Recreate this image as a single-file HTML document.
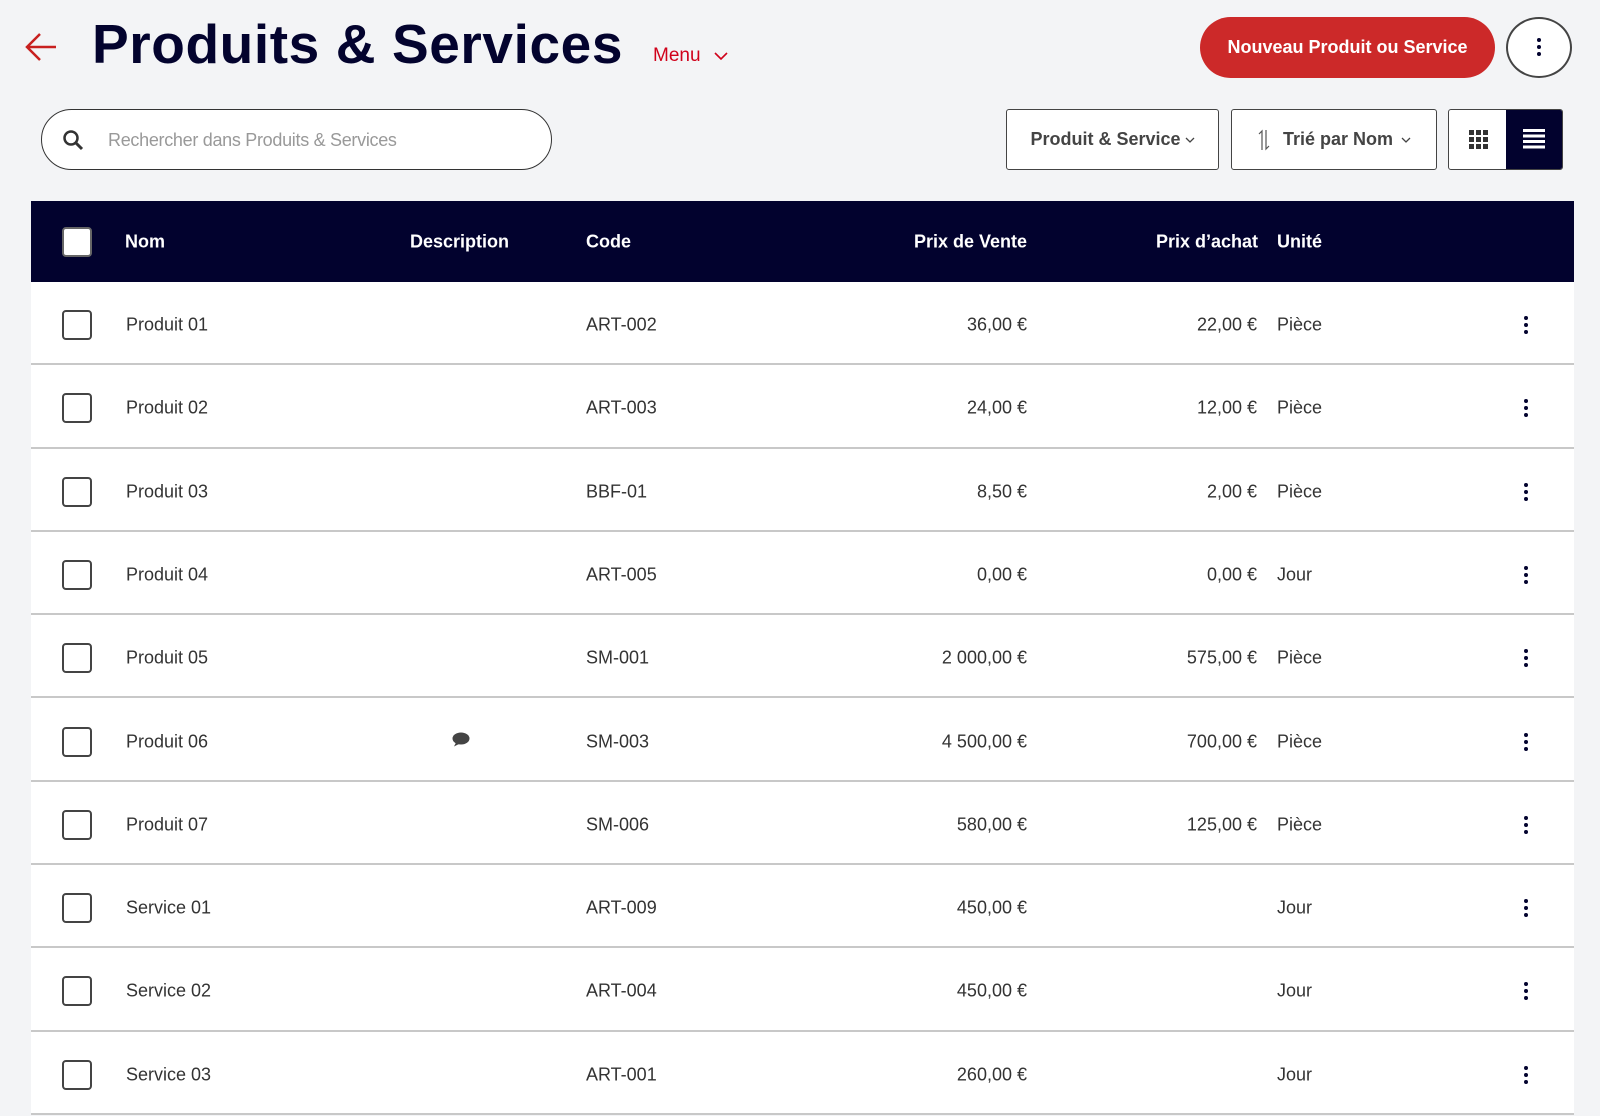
<!DOCTYPE html>
<html><head><meta charset="utf-8"><style>
*{box-sizing:border-box;margin:0;padding:0}
body{width:1600px;height:1116px;background:#f3f4f6;font-family:"Liberation Sans",sans-serif;position:relative;overflow:hidden;color:#333}
.abs{position:absolute}
.title{left:92px;top:12px;font-size:55px;font-weight:bold;color:#03032e;letter-spacing:0.6px;white-space:nowrap}
.menu{left:653px;top:45px;color:#d0021b;font-size:19px}
.red{left:1200px;top:17px;width:295px;height:61px;border-radius:31px;background:#cc2929;color:#fff;font-weight:bold;font-size:18px;display:flex;align-items:center;justify-content:center}
.circ{left:1506px;top:17px;width:66px;height:61px;border-radius:50%;border:2px solid #444;background:#fff}
.search{left:41px;top:109px;width:511px;height:61px;border:1.5px solid #333;border-radius:31px;background:#fff}
.search span{position:absolute;left:66px;top:20px;color:#999;font-size:18px;letter-spacing:-0.3px}
.btn{top:109px;height:61px;border:1.5px solid #444;border-radius:3px;background:#fff;display:flex;align-items:center;justify-content:center;font-size:18px;color:#444;font-weight:bold}
.table{left:31px;top:201px;width:1543px;height:913px;background:#fff}
.head{position:absolute;left:0;top:0;width:100%;height:81px;background:#02022e;color:#fff;font-weight:bold;font-size:18px}
.head div,.row div{position:absolute;top:50%;transform:translateY(-50%);white-space:nowrap}
.row div{top:53%}
.row{position:absolute;left:0;width:100%;height:83.3px;border-bottom:2px solid #c8c8c8;font-size:18px;color:#333}
.cb{width:30px;height:30px;border:2px solid #444;border-radius:4px;left:31px}
.r{text-align:right}
.keb{left:1493px;width:4px}
.keb i{display:block;width:4px;height:4px;border-radius:50%;background:#02022e;margin:3px 0}
</style></head><body>
<svg class="abs" style="left:24px;top:32px" width="34" height="30" viewBox="0 0 34 30"><path d="M32 15H3M16 2L3 15l13 13" fill="none" stroke="#c8201f" stroke-width="2.5"/></svg>
<div class="abs title">Produits &amp; Services</div>
<div class="abs menu">Menu <svg width="14" height="10" viewBox="0 0 14 10" style="margin-left:8px"><path d="M1 2l6 6 6-6" fill="none" stroke="#d0021b" stroke-width="1.6"/></svg></div>
<div class="abs red">Nouveau Produit ou Service</div>
<div class="abs circ"><div class="abs keb" style="left:29px;top:16px"><i></i><i></i><i></i></div></div>
<div class="abs search"><svg class="abs" style="left:20px;top:19px" width="22" height="22" viewBox="0 0 22 22"><circle cx="9" cy="9" r="6.5" fill="none" stroke="#333" stroke-width="2.5"/><path d="M14 14l6 6" stroke="#333" stroke-width="3"/></svg><span>Rechercher dans Produits &amp; Services</span></div>
<div class="abs btn" style="left:1006px;width:213px">Produit &amp; Service <svg width="10" height="8" viewBox="0 0 10 8" style="margin-left:4px"><path d="M1 2l4 4 4-4" fill="none" stroke="#444" stroke-width="1.3"/></svg></div>
<div class="abs btn" style="left:1231px;width:206px"><svg width="14" height="24" viewBox="0 0 14 24" style="margin-right:12px"><path d="M5 22V3L2 6M9 2v19l3-3" fill="none" stroke="#555" stroke-width="1.2"/></svg>Trié par Nom <svg width="10" height="8" viewBox="0 0 10 8" style="margin-left:8px"><path d="M1 2l4 4 4-4" fill="none" stroke="#444" stroke-width="1.3"/></svg></div>
<div class="abs btn" style="left:1448px;width:115px;justify-content:flex-start;overflow:hidden">
<svg style="margin-left:20px" width="20" height="20" viewBox="0 0 20 20" fill="#333"><rect x="0" y="0" width="5" height="5"/><rect x="7" y="0" width="5" height="5"/><rect x="14" y="0" width="5" height="5"/><rect x="0" y="7" width="5" height="5"/><rect x="7" y="7" width="5" height="5"/><rect x="14" y="7" width="5" height="5"/><rect x="0" y="14" width="5" height="5"/><rect x="7" y="14" width="5" height="5"/><rect x="14" y="14" width="5" height="5"/></svg>
<div class="abs" style="left:57px;top:-2px;width:60px;height:62px;background:#02022e"><svg class="abs" style="left:17px;top:21px" width="22" height="20" viewBox="0 0 22 20" fill="#fff"><rect y="0" width="22" height="3"/><rect y="5.5" width="22" height="3"/><rect y="11" width="22" height="3"/><rect y="16.5" width="22" height="3"/></svg></div></div>
<div class="abs table">
<div class="head"><div class="cb" style="background:#fff;border-color:#666"></div><div style="left:94px">Nom</div><div style="left:379px">Description</div><div style="left:555px">Code</div><div class="r" style="right:547px">Prix de Vente</div><div class="r" style="right:316px">Prix d’achat</div><div style="left:1246px">Unité</div></div>
<div id="rows"></div>
</div>
<script>
var d=[["Produit 01","ART-002","36,00 €","22,00 €","Pièce"],["Produit 02","ART-003","24,00 €","12,00 €","Pièce"],["Produit 03","BBF-01","8,50 €","2,00 €","Pièce"],["Produit 04","ART-005","0,00 €","0,00 €","Jour"],["Produit 05","SM-001","2 000,00 €","575,00 €","Pièce"],["Produit 06","SM-003","4 500,00 €","700,00 €","Pièce"],["Produit 07","SM-006","580,00 €","125,00 €","Pièce"],["Service 01","ART-009","450,00 €","","Jour"],["Service 02","ART-004","450,00 €","","Jour"],["Service 03","ART-001","260,00 €","","Jour"]];
var h="";d.forEach(function(r,i){h+='<div class="row" style="top:'+(81+i*83.3)+'px"><div class="cb"></div><div style="left:95px">'+r[0]+'</div>'+(i==5?'<div style="left:421px"><svg width="18" height="16" viewBox="0 0 18 16"><ellipse cx="9" cy="7" rx="8.5" ry="6" fill="#444"/><path d="M4 11l-2 4 6-3z" fill="#444"/></svg></div>':'')+'<div style="left:555px">'+r[1]+'</div><div class="r" style="right:547px">'+r[2]+'</div><div class="r" style="right:317px">'+r[3]+'</div><div style="left:1246px">'+r[4]+'</div><div class="keb"><i></i><i></i><i></i></div></div>'});
document.getElementById("rows").innerHTML=h;
</script>
</body></html>
